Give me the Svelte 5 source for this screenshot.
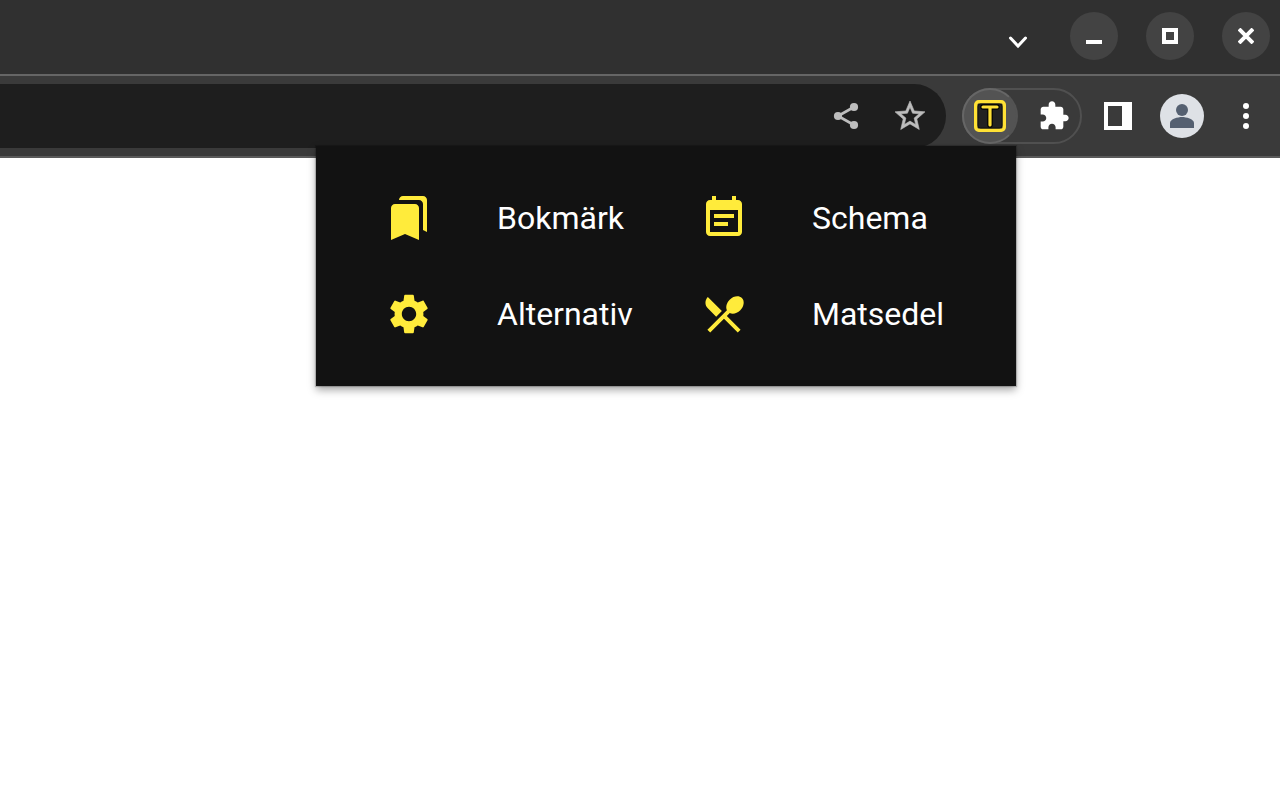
<script>
  const entries = [
    {
      label: 'Bokmärk',
      path: 'm19 18 2 1V3c0-1.1-.9-2-2-2H8.99C7.89 1 7 1.9 7 3h10c1.1 0 2 .9 2 2v13zM15 5H5c-1.1 0-2 .9-2 2v16l7-3 7 3V7c0-1.1-.9-2-2-2z'
    },
    {
      label: 'Schema',
      path: 'M19 3h-1V1h-2v2H8V1H6v2H5c-1.11 0-2 .9-2 2v14c0 1.1.89 2 2 2h14c1.1 0 2-.9 2-2V5c0-1.1-.9-2-2-2zm0 16H5V8h14v11zM17 10H7v2h10v-2zm-3 4H7v2h7v-2z'
    },
    {
      label: 'Alternativ',
      path: 'M19.14 12.94c.04-.3.06-.61.06-.94 0-.32-.02-.64-.07-.94l2.03-1.58c.18-.14.23-.41.12-.61l-1.92-3.32c-.12-.22-.37-.29-.59-.22l-2.39.96c-.5-.38-1.03-.7-1.62-.94l-.36-2.54c-.04-.24-.24-.41-.48-.41h-3.84c-.24 0-.43.17-.47.41l-.36 2.54c-.59.24-1.13.57-1.62.94l-2.39-.96c-.22-.08-.47 0-.59.22L2.74 8.87c-.12.21-.08.47.12.61l2.03 1.58c-.05.3-.09.63-.09.94s.02.64.07.94l-2.03 1.58c-.18.14-.23.41-.12.61l1.92 3.32c.12.22.37.29.59.22l2.39-.96c.5.38 1.03.7 1.62.94l.36 2.54c.05.24.24.41.48.41h3.84c.24 0 .44-.17.47-.41l.36-2.54c.59-.24 1.13-.56 1.62-.94l2.39.96c.22.08.47 0 .59-.22l1.92-3.32c.12-.22.07-.47-.12-.61l-2.01-1.58zM12 15.6c-1.98 0-3.6-1.62-3.6-3.6s1.62-3.6 3.6-3.6 3.6 1.62 3.6 3.6-1.62 3.6-3.6 3.6z'
    },
    {
      label: 'Matsedel',
      path: 'm8.1 13.34 2.83-2.83L3.91 3.5c-1.56 1.56-1.56 4.09 0 5.66l4.19 4.18zm6.78-1.81c1.53.71 3.68.21 5.27-1.38 1.91-1.91 2.28-4.65.81-6.12-1.46-1.46-4.2-1.1-6.12.81-1.59 1.59-2.09 3.74-1.38 5.27L3.7 19.87l1.41 1.41L12 14.41l6.88 6.88 1.41-1.41L13.41 13l1.47-1.47z'
    }
  ];
</script>

<div class="browser">
  <div class="titlebar">
    <button class="tab-search" aria-label="Search tabs">
      <svg width="20" height="14" viewBox="0 0 20 14"><path d="M2.5 3 10 11l7.5-8" /></svg>
    </button>
    <div class="window-buttons">
      <button aria-label="Minimize">
        <svg width="16" height="16" viewBox="0 0 16 16"><path fill="#fff" d="M0 12h16v4H0z" /></svg>
      </button>
      <button aria-label="Maximize">
        <svg width="16" height="16" viewBox="0 0 16 16"><path fill="#fff" fill-rule="evenodd" d="M0 0h16v16H0zM4 4v8h8V4z" /></svg>
      </button>
      <button aria-label="Close">
        <svg width="16" height="16" viewBox="0 0 16 16"><path stroke="#fff" stroke-width="4" d="m1 1 14 14M15 1 1 15" /></svg>
      </button>
    </div>
  </div>

  <div class="toolbar">
    <div class="address">
      <button aria-label="Share">
        <svg width="32" height="32" viewBox="0 0 32 32">
          <path d="M24 7 8 16l16 9" fill="none" stroke="#bdbdbd" stroke-width="2.7" />
          <g fill="#bdbdbd"><circle cx="8" cy="16" r="4.1" /><circle cx="24" cy="7" r="4.1" /><circle cx="24" cy="25" r="4.1" /></g>
        </svg>
      </button>
      <button aria-label="Bookmark this page">
        <svg width="36" height="36" viewBox="0 0 24 24">
          <path fill="#bdbdbd" stroke="#bdbdbd" stroke-width=".4" d="m22 9.24-7.19-.62L12 2 9.19 8.63 2 9.24l5.46 4.73L5.82 21 12 17.27 18.18 21l-1.63-7.03L22 9.24zM12 15.4l-3.76 2.27 1-4.28-3.32-2.88 4.38-.38L12 6.1l1.71 4.04 4.38.38-3.32 2.88 1 4.28L12 15.4z" />
        </svg>
      </button>
    </div>

    <div class="extensions">
      <button class="active" aria-label="Extension">
        <svg width="32" height="32" viewBox="0 0 32 32">
          <rect x="1.75" y="1.75" width="28.5" height="28.5" rx="3" fill="#222" stroke="#ffe135" stroke-width="3.5" />
          <rect x="4" y="4" width="24" height="24" rx="2.5" fill="none" stroke="#111" />
          <path d="M9 7h14M16 7v18" fill="none" stroke="#000" stroke-width="5.4" stroke-linecap="round" />
          <path d="M9 7h14M16 7v18" fill="none" stroke="#ffe135" stroke-width="3.2" stroke-linecap="round" />
        </svg>
      </button>
      <button class="puzzle" aria-label="Extensions">
        <svg width="32" height="32" viewBox="0 0 24 24"><path fill="#fff" d="M20.5 11H19V7c0-1.1-.9-2-2-2h-4V3.5C13 2.12 11.88 1 10.5 1S8 2.12 8 3.5V5H4c-1.1 0-1.99.9-1.99 2v3.8H3.5c1.49 0 2.7 1.21 2.7 2.7s-1.21 2.7-2.7 2.7H2V20c0 1.1.9 2 2 2h3.8v-1.5c0-1.49 1.21-2.7 2.7-2.7 1.49 0 2.7 1.21 2.7 2.7V22H17c1.1 0 2-.9 2-2v-4h1.5c1.38 0 2.5-1.12 2.5-2.5S21.88 11 20.5 11z" /></svg>
      </button>
    </div>

    <button class="tool" aria-label="Side panel">
      <svg width="28" height="28" viewBox="0 0 28 28"><path fill="#fff" fill-rule="evenodd" d="M0 0h28v28H0zM4 4v20h14V4z" /></svg>
    </button>
    <button class="tool" aria-label="Profile">
      <svg width="44" height="44" viewBox="0 0 44 44">
        <circle cx="22" cy="22" r="22" fill="#dee1e6" />
        <circle cx="22" cy="16" r="6" fill="#556071" />
        <path fill="#556071" d="M10 34v-5c0-4 8-6 12-6s12 2 12 6v5z" />
      </svg>
    </button>
    <button class="tool" aria-label="Menu">
      <svg width="8" height="28" viewBox="0 0 8 28" fill="#fff"><circle cx="4" cy="4" r="3" /><circle cx="4" cy="14" r="3" /><circle cx="4" cy="24" r="3" /></svg>
    </button>
  </div>

  <nav class="popup">
    {#each entries as entry}
      <button class="entry">
        <svg width="48" height="48" viewBox="0 0 24 24" aria-hidden="true"><path d={entry.path} /></svg>
        <span>{entry.label}</span>
      </button>
    {/each}
  </nav>
</div>

<style>
  :global(body) {
    margin: 0;
    background: #fff;
    font-family: Roboto, sans-serif;
  }

  button {
    display: flex;
    align-items: center;
    justify-content: center;
    flex: none;
    margin: 0;
    padding: 0;
    border: 0;
    background: none;
    color: inherit;
    font: inherit;
    cursor: pointer;
  }

  svg {
    display: block;
    flex: none;
  }

  .browser {
    position: relative;
    min-height: 100vh;
  }

  .titlebar {
    box-sizing: border-box;
    display: flex;
    justify-content: flex-end;
    align-items: flex-start;
    gap: 28px;
    height: 76px;
    padding: 12px 10px 0 0;
    border-bottom: 2px solid #656565;
    background: #303030;
  }

  .tab-search {
    width: 48px;
    height: 60px;
  }

  .tab-search path {
    fill: none;
    stroke: #fff;
    stroke-width: 3;
    stroke-linecap: round;
  }

  .window-buttons {
    display: flex;
    gap: 28px;
  }

  .window-buttons button {
    width: 48px;
    height: 48px;
    border-radius: 50%;
    background: #434343;
  }

  .toolbar {
    box-sizing: border-box;
    display: flex;
    align-items: center;
    height: 82px;
    padding-right: 6px;
    border-bottom: 2px solid #5a5a5a;
    background: #3a3a3a;
  }

  .address {
    box-sizing: border-box;
    display: flex;
    flex: 1;
    align-items: center;
    justify-content: flex-end;
    gap: 30px;
    height: 64px;
    padding-right: 18px;
    border-radius: 0 32px 32px 0;
    background: #1e1e1e;
  }

  .extensions {
    box-sizing: border-box;
    display: flex;
    align-items: center;
    width: 120px;
    height: 56px;
    margin: 0 8px 0 16px;
    border: 2px solid #505050;
    border-radius: 28px;
  }

  .extensions button {
    width: 56px;
    height: 56px;
    border-radius: 50%;
  }

  .extensions .active {
    box-sizing: border-box;
    margin-left: -2px;
    border: 2px solid #666;
    border-right-color: #535353;
    background: #535353;
  }

  .extensions .puzzle {
    margin-left: 8px;
  }

  .tool {
    width: 56px;
    height: 56px;
  }

  .tool + .tool {
    margin-left: 8px;
  }

  .popup {
    position: absolute;
    top: 146px;
    right: 264px;
    box-sizing: border-box;
    display: grid;
    grid-template-columns: 1fr 1fr;
    width: 700px;
    padding: 24px 33px 24px 37px;
    background: #121212;
    color: #fff;
    box-shadow: 0 0 1px 1px rgba(0, 0, 0, 0.2), 0 4px 8px rgba(0, 0, 0, 0.35);
  }

  .entry {
    justify-content: flex-start;
    gap: 64px;
    height: 96px;
    padding: 0 32px;
    font-size: 32px;
    line-height: 48px;
  }

  .entry path {
    fill: #ffeb3b;
  }
</style>
